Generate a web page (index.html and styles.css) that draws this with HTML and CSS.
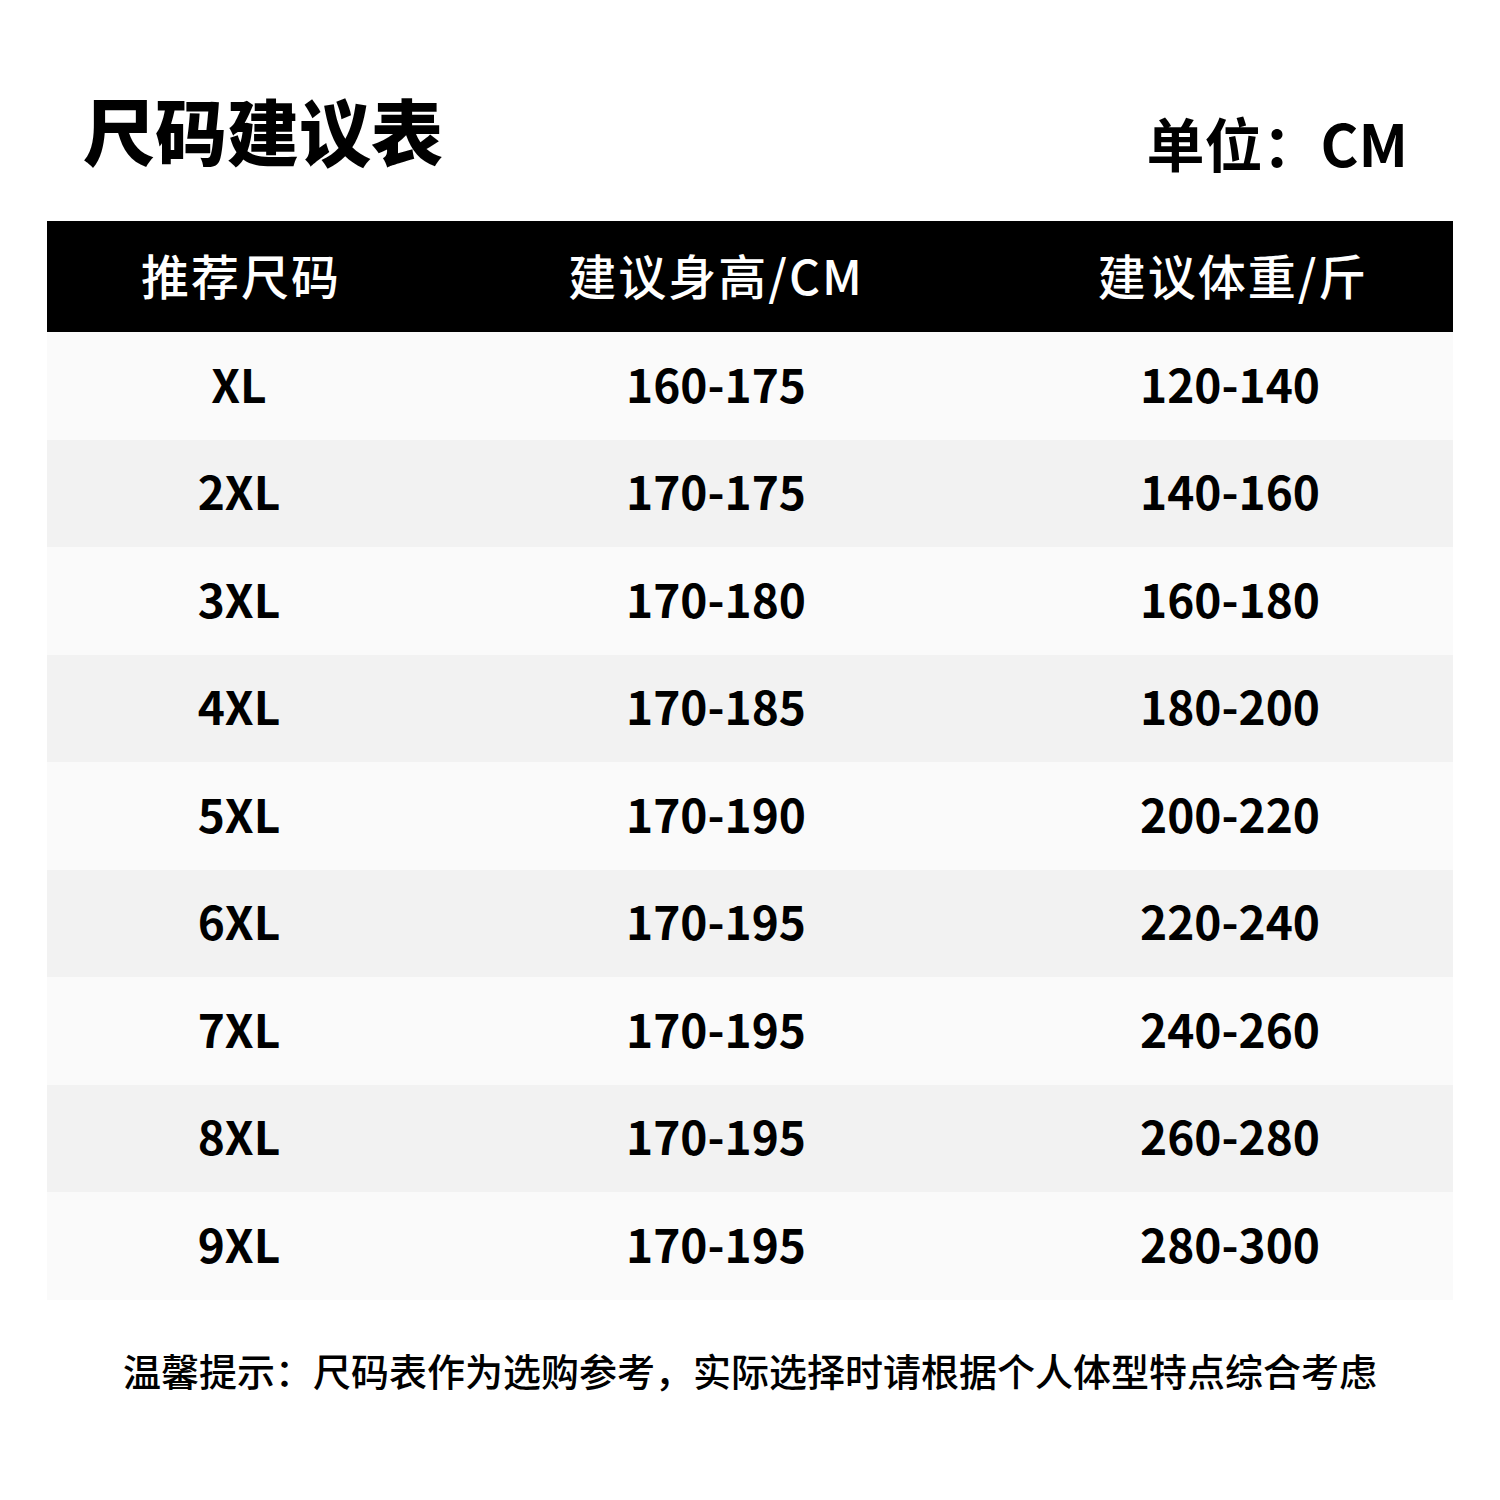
FILE: index.html
```html
<!DOCTYPE html>
<html lang="zh-CN">
<head>
<meta charset="utf-8">
<title>尺码建议表</title>
<link rel="stylesheet" href="styles.css">
</head>
<body>
<div class="page">
  <div class="top">
    <h1 class="title">尺码建议表</h1>
    <div class="unit">单位：CM</div>
  </div>
  <div class="table">
    <div class="row head">
      <div class="c1">推荐尺码</div>
      <div class="c2">建议身高/CM</div>
      <div class="c3">建议体重/斤</div>
    </div>
    <div class="row odd"><div class="c1">XL</div><div class="c2">160-175</div><div class="c3">120-140</div></div>
    <div class="row even"><div class="c1">2XL</div><div class="c2">170-175</div><div class="c3">140-160</div></div>
    <div class="row odd"><div class="c1">3XL</div><div class="c2">170-180</div><div class="c3">160-180</div></div>
    <div class="row even"><div class="c1">4XL</div><div class="c2">170-185</div><div class="c3">180-200</div></div>
    <div class="row odd"><div class="c1">5XL</div><div class="c2">170-190</div><div class="c3">200-220</div></div>
    <div class="row even"><div class="c1">6XL</div><div class="c2">170-195</div><div class="c3">220-240</div></div>
    <div class="row odd"><div class="c1">7XL</div><div class="c2">170-195</div><div class="c3">240-260</div></div>
    <div class="row even"><div class="c1">8XL</div><div class="c2">170-195</div><div class="c3">260-280</div></div>
    <div class="row odd"><div class="c1">9XL</div><div class="c2">170-195</div><div class="c3">280-300</div></div>
  </div>
  <p class="note">温馨提示：尺码表作为选购参考，实际选择时请根据个人体型特点综合考虑</p>
</div>
</body>
</html>
```
FILE: styles.css
```css
html, body {
  margin: 0;
  padding: 0;
  background: #ffffff;
}
body {
  font-family: "Noto Sans CJK SC", "Noto Sans", sans-serif;
  color: #000;
}
.page {
  width: 1500px;
  height: 1500px;
  padding: 0 47px;
  box-sizing: border-box;
}
.top {
  height: 221px;
  display: flex;
  justify-content: space-between;
  align-items: flex-start;
}
.title {
  margin: 93px 0 0 36px;
  font-size: 72px;
  line-height: 1;
  font-weight: 900;
}
.unit {
  margin: 113px 45px 0 0;
  font-size: 58px;
  line-height: 1;
  font-weight: 700;
}
.table {
  display: flex;
  flex-direction: column;
}
.row {
  display: grid;
  grid-template-columns: 384px 570px 452px;
  height: 107.5px;
  align-items: center;
  font-size: 46px;
  font-weight: 700;
  line-height: 1;
}
.row > div {
  text-align: center;
  margin-top: -6px;
}
.row > .c3 {
  padding-left: 6px;
}
.row.head {
  height: 111px;
  background: #000;
  color: #fff;
  font-size: 48px;
  font-weight: 500;
  letter-spacing: 2px;
}
.row.head > .c1 {
  padding-left: 4px;
}
.row.head > .c3 {
  padding-left: 12px;
}
.row.odd { background: #fafafa; }
.row.even { background: #f2f2f2; }
.note {
  margin: 51px 0 0 0;
  text-align: center;
  font-size: 38px;
  line-height: 1;
  font-weight: 500;
}
```
